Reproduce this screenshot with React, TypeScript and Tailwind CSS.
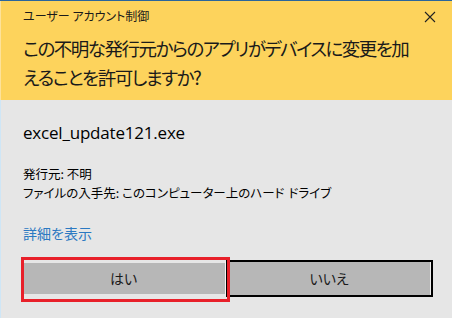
import React from "react";

export default function App() {
  const jp = "font-['Segoe_UI','Noto_Sans_CJK_JP',sans-serif] [font-feature-settings:'palt']";
  return (
    <div className={`relative w-[452px] h-[318px] overflow-hidden bg-[#e6e6e6] ${jp}`}>
      <div className="h-px bg-[#2a659c]" />
      <div className="h-[99px] bg-[#fdd35c] border-l border-[#fde29a] text-[#1a1a1a]">
        <div className="flex items-center justify-between pl-[22px] pr-[16px] pt-[7px]">
          <span className="text-[12px] leading-[16px]">ユーザー アカウント制御</span>
          <svg width="12" height="12" viewBox="0 0 12 12" className="mt-[2px]">
            <path d="M1 1 L11 11 M11 1 L1 11" stroke="#222" strokeWidth="1.1" />
          </svg>
        </div>
        <div className="pl-[22px] mt-[10px] text-[18.5px] leading-[29px] tracking-[-1.5px]">
          <div className="whitespace-nowrap">この不明な発行元からのアプリがデバイスに変更を加</div>
          <div className="whitespace-nowrap">えることを許可しますか?</div>
        </div>
      </div>
      <div className="h-[218px] border-l border-[#cfe6f6] pl-[22px] text-black">
        <div className="pt-[22px] text-[17px] leading-[22px] font-['Segoe_UI','Open_Sans',sans-serif] tracking-[-0.2px]">
          excel_update121.exe
        </div>
        <div className="mt-[20px] text-[12.5px] leading-[19px]">
          <div>発行元: 不明</div>
          <div>
            ファイルの入手先: このコンピューター上のハード
            <span className="inline-block w-[4px]" />
            ドライブ
          </div>
        </div>
        <div className="mt-[21px] text-[14px] leading-[20px] text-[#2b79c2]">詳細を表示</div>
        <div className="mt-[17px] flex h-[37px]">
          <div className="w-[204px] -ml-[1px] h-full bg-[#b7b7b7] border-y-[3px] border-[#e6e6e6] border-r border-r-[#f4f4f4] flex items-center justify-center text-[14px] text-[#1a1a1a]">
            はい
          </div>
          <div className="w-[207px] h-full bg-[#b7b7b7] border-2 border-black flex items-center justify-center text-[14px] text-[#1a1a1a]">
            <div className="flex-1 h-full flex items-center justify-center border-r border-[#efefef]">いいえ</div>
          </div>
        </div>
      </div>
      <div className="absolute left-[21px] top-[257px] w-[209px] h-[45px] border-[3px] border-[#e8202a]" />
    </div>
  );
}
